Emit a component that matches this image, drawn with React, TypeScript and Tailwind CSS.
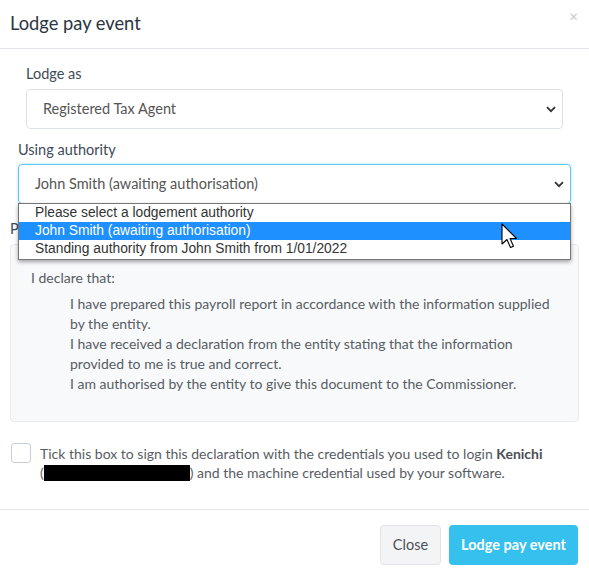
const Chevron = () => (
  <svg width="10" height="7" viewBox="0 0 10 7" className="shrink-0">
    <path d="M1 1.2 L5 5.2 L9 1.2" fill="none" stroke="#333" strokeWidth="1.8" />
  </svg>
);

const Cursor = () => (
  <svg width="20" height="28" viewBox="0 0 20 28" className="absolute left-[501px] top-[223px]">
    <path
      d="M1 1 L1 21 L6 16.5 L9.5 24.5 L12.5 23.2 L9 15.5 L15.5 15.5 Z"
      fill="#fff"
      stroke="#000"
      strokeWidth="1.1"
      strokeLinejoin="round"
    />
  </svg>
);

const options = [
  "Please select a lodgement authority",
  "John Smith (awaiting authorisation)",
  "Standing authority from John Smith from 1/01/2022",
];

const AuthorityDropdown = () => {
  return (
    <div className="absolute left-[18px] top-[203px] w-[553px] border border-[#767676] bg-white shadow-[0_2px_4px_rgba(0,0,0,0.35)] font-['Liberation_Sans',sans-serif] text-[13.8px] pb-[1px]">
      {options.map((o, i) => (
        <div
          key={o}
          className={`h-[18px] leading-[18px] pl-[16px] ${
            i === 1 ? "bg-[#1e90ff] text-white" : "text-[#333]"
          }`}
        >
          {o}
        </div>
      ))}
    </div>
  );
};

export default function App() {
  return (
    <div className="relative w-[589px] h-[571px] bg-white font-['Lato',sans-serif] overflow-hidden">
      <div className="h-[49px] border-b border-[#e3e7eb] flex items-center justify-between pl-[10px] pr-[11px]">
        <span className="text-[18.3px] text-[#2b3440]">Lodge pay event</span>
        <span className="text-[15px] text-[#c8c8c8] -mt-[15px]">×</span>
      </div>

      <div className="px-[26px] pt-[15px]">
        <div className="text-[14.5px] text-[#3e4a58] leading-[20px]">Lodge as</div>
        <div className="mt-[5px] h-[40px] border border-[#dde2e7] rounded-[4px] flex items-center justify-between pl-[16px] pr-[6px]">
          <span className="text-[14.5px] text-[#555]">Registered Tax Agent</span>
          <Chevron />
        </div>
      </div>

      <div className="px-[18px] pt-[11px]">
        <div className="text-[14.5px] text-[#3e4a58] leading-[20px]">Using authority</div>
        <div className="mt-[4px] h-[40px] border border-[#5ec8f2] rounded-[4px] shadow-[0_0_3px_rgba(53,192,238,0.45)] flex items-center justify-between pl-[16px] pr-[6px]">
          <span className="text-[14.5px] text-[#555]">John Smith (awaiting authorisation)</span>
          <Chevron />
        </div>
      </div>

      <div className="px-[10px] pt-[15px]">
        <div className="text-[14.5px] text-[#3e4a58] leading-[20px]">Payroll declaration</div>
        <div className="mt-[5px] h-[178px] bg-[#f7f9fb] border border-[#e8ecf0] rounded-[4px] pl-[20px] pr-[12px] pt-[23px] text-[14px] text-[#585d63] leading-[20px]">
          <div>I declare that:</div>
          <div className="pl-[39px] pt-[6px] pr-[14px]">
            <div>I have prepared this payroll report in accordance with the information supplied by the entity.</div>
            <div>I have received a declaration from the entity stating that the information provided to me is true and correct.</div>
            <div>I am authorised by the entity to give this document to the Commissioner.</div>
          </div>
        </div>
      </div>

      <div className="flex items-start gap-[9px] pl-[11px] pr-[20px] pt-[22px] h-[88px] border-b border-[#e3e7eb]">
        <div className="-mt-[1px] w-[20px] h-[20px] shrink-0 border border-[#c6ced7] rounded-[3px] bg-white" />
        <div className="text-[14px] text-[#585d63] leading-[19px]">
          Tick this box to sign this declaration with the credentials you used to login{" "}
          <span className="font-bold text-[#4a4f55]">Kenichi</span>{" "}
          <br />(<span className="inline-block align-middle w-[146px] h-[16px] bg-black -mt-[2px]" />) and the machine credential used by your software.
        </div>
      </div>

      <div className="flex justify-end gap-[8px] pt-[15px] pr-[11px]">
        <button
          type="button"
          className="h-[40px] w-[61px] rounded-[4px] bg-[#f3f4f6] border border-[#e0e3e7] text-[14.5px] text-[#4b5159]"
        >
          Close
        </button>
        <button
          type="button"
          className="h-[40px] w-[129px] rounded-[4px] bg-[#35c0ee] text-[14.5px] font-bold text-white"
        >
          Lodge pay event
        </button>
      </div>

      <AuthorityDropdown />
      <Cursor />
    </div>
  );
}
